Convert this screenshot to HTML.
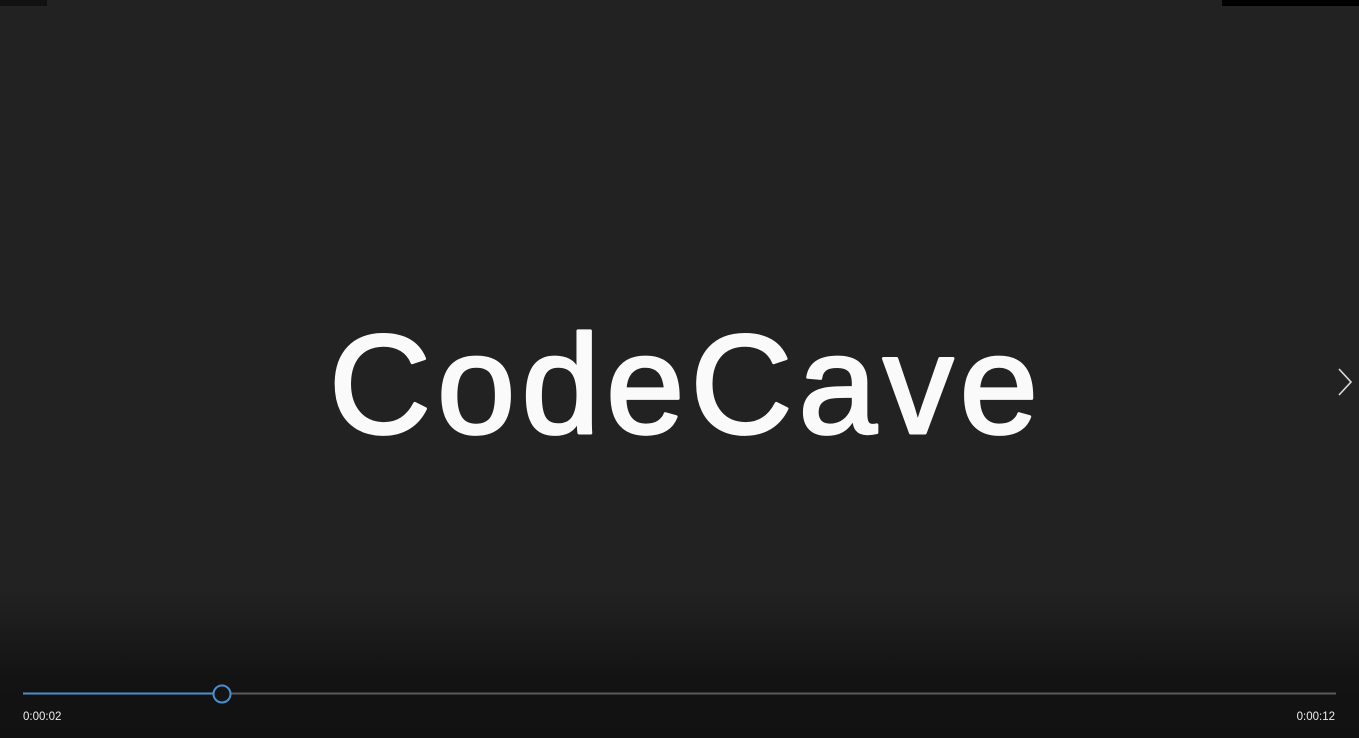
<!DOCTYPE html>
<html><head><meta charset="utf-8"><style>
html,body{margin:0;padding:0;width:1359px;height:738px;overflow:hidden;background:#222;font-family:"Liberation Sans",sans-serif}
.fade{position:absolute;left:0;top:590px;width:1359px;height:148px;background:linear-gradient(#222,#131313 60%,#111)}
.bar{position:absolute;top:0;height:6px;background:#000}
.t{position:absolute;top:711px;color:#eee;font-size:11.5px}
</style></head><body>
<div class="bar" style="left:0;width:47px;background:#111"></div>
<div class="bar" style="left:1222px;width:137px"></div>
<svg style="position:absolute;left:0;top:0" width="1359" height="738">
<text x="329" y="433" font-family="Liberation Sans" font-size="141" fill="#fafafa" stroke="#fafafa" stroke-width="3" stroke-linejoin="round" textLength="709" lengthAdjust="spacing">CodeCave</text>
<path d="M1339 369 L1351 382 L1339 395" fill="none" stroke="#ddd" stroke-width="1.6"/>
</svg>
<div class="fade"></div>
<svg style="position:absolute;left:0;top:0" width="1359" height="738">
<line x1="23" y1="693.5" x2="1336" y2="693.5" stroke="#5a5a5a" stroke-width="2"/>
<line x1="23" y1="693.5" x2="214" y2="693.5" stroke="#4a90d0" stroke-width="2"/>
<circle cx="222" cy="694" r="8.5" fill="#141414" stroke="#4a90d0" stroke-width="2"/>
</svg>
<div class="t" style="left:23px">0:00:02</div>
<div class="t" style="right:24px">0:00:12</div>
</body></html>
